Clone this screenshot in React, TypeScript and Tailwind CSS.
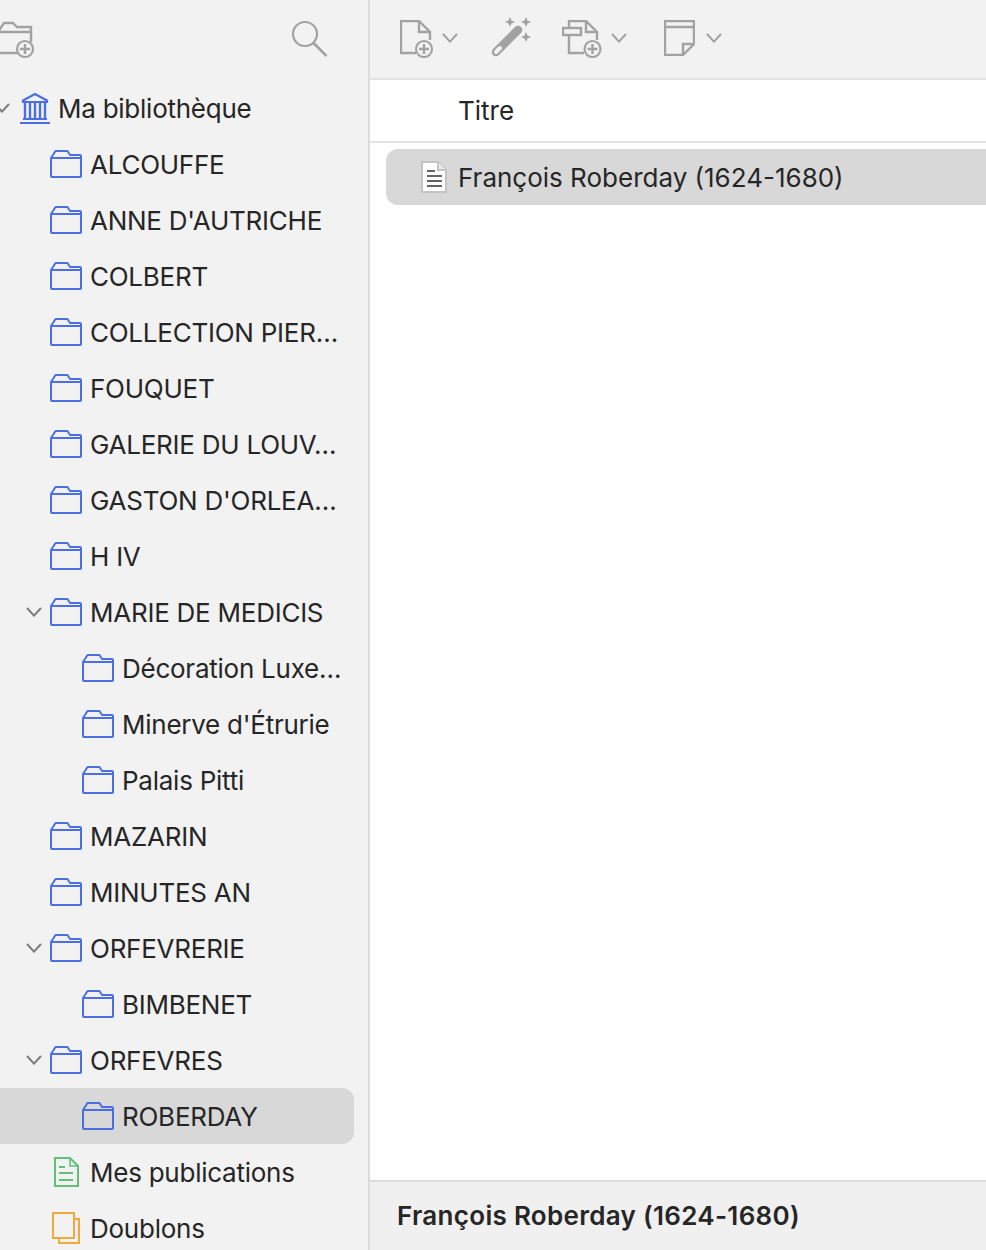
import React from 'react';
import clsx from 'clsx';

const BLUE = '#4a6fe3';
const GRAY = '#a2a2a2';

const Chevron = ({ className, color = '#7b7b7b' }: { className?: string; color?: string }) => (
	<svg width="16" height="10" viewBox="0 0 16 10" fill="none" className={clsx('shrink-0', className)}>
		<path d="M1 1l7 7.600L15 1" stroke={color} strokeWidth="2" />
	</svg>
);

const FolderIcon = () => (
	<svg width="32" height="28" viewBox="0 0 32 28" fill="none">
		<path
			d="M1 8V26a1 1 0 0 0 1 1H30a1 1 0 0 0 1-1V6a1 1 0 0 0-1-1H20L17.500 1H5.500L1 8H31"
			stroke={BLUE}
			strokeWidth="2"
			strokeLinejoin="round"
		/>
	</svg>
);

const LibraryIcon = () => (
	<svg width="30" height="32" viewBox="0 0 30 32" fill="none">
		<path d="M3 8.500L15 2l12 6.500V10H3z" stroke={BLUE} strokeWidth="2.200" />
		<path d="M3 27h24" stroke={BLUE} strokeWidth="2" />
		<path d="M5 11v15M10 11v15M15 11v15M20 11v15M25 11v15" stroke={BLUE} strokeWidth="2.400" />
		<path d="M0 31h30" stroke={BLUE} strokeWidth="2" />
	</svg>
);

const PublicationsIcon = () => (
	<svg width="25" height="30" viewBox="0 0 25 30" fill="none">
		<path d="M1 1H16L24 9V29H1z" stroke="#62c076" strokeWidth="2" />
		<path d="M16 1V9H24" stroke="#62c076" strokeWidth="1.600" />
		<path d="M5 10h6M5 16h14M5 23h14" stroke="#62c076" strokeWidth="2" />
	</svg>
);

const DuplicatesIcon = () => (
	<svg width="28" height="32" viewBox="0 0 28 32" fill="none">
		<path d="M22 7H27V31H7V26" stroke="#f0a93a" strokeWidth="2" />
		<rect x="1" y="1" width="21" height="25" stroke="#f0a93a" strokeWidth="2" />
	</svg>
);

const PlusBadge = ({ cx, cy }: { cx: number; cy: number }) => (
	<>
		<circle cx={cx} cy={cy} r="8" stroke={GRAY} strokeWidth="2.200" fill="#f2f2f2" />
		<path d={`M${cx - 5} ${cy}h10M${cx} ${cy - 5}v10`} stroke={GRAY} strokeWidth="2.400" />
	</>
);

const NewFolderIcon = () => (
	<svg width="34" height="40" viewBox="0 0 34 40" fill="none">
		<path d="M-2 12L4 3H13L17 7H31V22M0 12H31M0 33H18" stroke={GRAY} strokeWidth="2.400" />
		<PlusBadge cx={25} cy={29} />
	</svg>
);

const SearchIcon = () => (
	<svg width="38" height="38" viewBox="0 0 38 38" fill="none">
		<circle cx="15" cy="14" r="12" stroke={GRAY} strokeWidth="2.200" />
		<path d="M23.500 23l13 13" stroke={GRAY} strokeWidth="2.500" />
	</svg>
);

const NewItemIcon = () => (
	<svg width="34" height="38" viewBox="0 0 34 38" fill="none">
		<path d="M16 33H1V1H19L30 12V20" stroke={GRAY} strokeWidth="2.400" />
		<path d="M19 1V12H30" stroke={GRAY} strokeWidth="2.400" />
		<PlusBadge cx={24} cy={29} />
	</svg>
);

const WandIcon = () => (
	<svg width="40" height="40" viewBox="0 0 40 40" fill="none">
		<path d="M5 35L27 13" stroke={GRAY} strokeWidth="8.500" strokeLinecap="round" />
		<path d="M5 35L9 31" stroke="#f2f2f2" strokeWidth="4" strokeLinecap="round" />
		<path
			d="M19 0l1.500 3.500L24 5l-3.500 1.500L19 10l-1.500-3.500L14 5l3.500-1.500zM35 0l1.500 3.500L40 5l-3.500 1.500L35 10l-1.500-3.500L30 5l3.500-1.500zM35 15l1.500 3.500L40 20l-3.500 1.500L35 25l-1.500-3.500L30 20l3.500-1.500z"
			fill={GRAY}
		/>
	</svg>
);

const AttachIcon = () => (
	<svg width="41" height="38" viewBox="0 0 41 38" fill="none">
		<path d="M7 8V1H24L35 12V20M22 33H7V15" stroke={GRAY} strokeWidth="2.400" />
		<path d="M24 1V12H35" stroke={GRAY} strokeWidth="2.400" />
		<rect x="1" y="8" width="18" height="7" stroke={GRAY} strokeWidth="2.400" fill="#f2f2f2" />
		<PlusBadge cx={30.500} cy={29} />
	</svg>
);

const NoteIcon = () => (
	<svg width="31" height="36" viewBox="0 0 31 36" fill="none">
		<path d="M1 1H30V24L19 35H1z" stroke={GRAY} strokeWidth="2.400" />
		<path d="M1 7H30M19 35V24H30" stroke={GRAY} strokeWidth="2.400" />
	</svg>
);

const DocumentIcon = () => (
	<svg width="26" height="32" viewBox="0 0 26 32" fill="none">
		<path d="M1 1H17L25 9V31H1z" fill="#fff" stroke="#c4c4c4" strokeWidth="2" />
		<path d="M17 1V9H25" fill="#ececec" stroke="#c4c4c4" strokeWidth="2" />
		<path d="M6 10h8M6 15h15M6 20h15M6 25h15" stroke="#333" strokeWidth="1.600" />
	</svg>
);

interface TreeRow {
	label: string;
	depth: number;
	open?: boolean;
	selected?: boolean;
	icon?: React.ReactNode;
}

const rows: TreeRow[] = [
	{ label: 'ALCOUFFE', depth: 1 },
	{ label: "ANNE D'AUTRICHE", depth: 1 },
	{ label: 'COLBERT', depth: 1 },
	{ label: 'COLLECTION PIER…', depth: 1 },
	{ label: 'FOUQUET', depth: 1 },
	{ label: 'GALERIE DU LOUV…', depth: 1 },
	{ label: "GASTON D'ORLEA…", depth: 1 },
	{ label: 'H IV', depth: 1 },
	{ label: 'MARIE DE MEDICIS', depth: 1, open: true },
	{ label: 'Décoration Luxe…', depth: 2 },
	{ label: "Minerve d'Étrurie", depth: 2 },
	{ label: 'Palais Pitti', depth: 2 },
	{ label: 'MAZARIN', depth: 1 },
	{ label: 'MINUTES AN', depth: 1 },
	{ label: 'ORFEVRERIE', depth: 1, open: true },
	{ label: 'BIMBENET', depth: 2 },
	{ label: 'ORFEVRES', depth: 1, open: true },
	{ label: 'ROBERDAY', depth: 2, selected: true },
	{ label: 'Mes publications', depth: 1, icon: <PublicationsIcon /> },
	{ label: 'Doublons', depth: 1, icon: <DuplicatesIcon /> },
];

const Row = ({ label, depth, open, selected, icon }: TreeRow) => (
	<div
		className={clsx(
			'flex h-14 shrink-0 items-center rounded-r-xl',
			depth === 1 ? 'pl-[26px]' : 'pl-[58px]',
			selected && 'bg-[#d8d8d8]'
		)}
	>
		<div className="mr-2 flex w-4 shrink-0 justify-center">{open && <Chevron />}</div>
		<div className="mr-2 flex w-8 shrink-0 justify-center">{icon ?? <FolderIcon />}</div>
		<span className="whitespace-nowrap">{label}</span>
	</div>
);

export default function App() {
	return (
		<div className="flex h-[1250px] w-[986px] overflow-hidden bg-white font-['Inter',sans-serif] text-[26px] text-[#262626]">
			{/* Sidebar. */}
			<aside className="flex w-[370px] shrink-0 flex-col overflow-hidden border-r-2 border-[#dcdcdc] bg-[#f2f2f2] tracking-[-0.25px]">
				<div className="flex h-20 shrink-0 items-start justify-between pt-[20px] pr-[40px]">
					<NewFolderIcon />
					<SearchIcon />
				</div>
				<div className="flex w-[354px] flex-col">
					<div className="flex h-14 shrink-0 items-center">
						<Chevron className="-ml-[6px] mr-[10px]" />
						<div className="mr-[8px] w-[30px] shrink-0">
							<LibraryIcon />
						</div>
						<span>Ma bibliothèque</span>
					</div>
					{rows.map((row) => (
						<Row key={row.label} {...row} />
					))}
				</div>
			</aside>

			{/* Main column. */}
			<main className="flex min-w-0 flex-1 flex-col">
				<div className="flex h-20 shrink-0 items-start border-b-2 border-[#e3e3e3] bg-[#f2f2f2] pl-[30px]">
					<div className="mt-[20px]">
						<NewItemIcon />
					</div>
					<Chevron className="ml-2 mt-[33px]" color={GRAY} />
					<div className="ml-[33px] mt-[17px]">
						<WandIcon />
					</div>
					<div className="ml-[31px] mt-[20px]">
						<AttachIcon />
					</div>
					<Chevron className="ml-2 mt-[33px]" color={GRAY} />
					<div className="ml-[37px] mt-[20px]">
						<NoteIcon />
					</div>
					<Chevron className="ml-[11px] mt-[33px]" color={GRAY} />
				</div>
				<div className="flex h-[63px] shrink-0 items-center border-b-2 border-[#e3e3e3] pl-[88px]">Titre</div>
				<div className="flex-1 pt-[6px] pl-4">
					<div className="flex h-14 items-center rounded-l-xl bg-[#d8d8d8] pl-[35px]">
						<DocumentIcon />
						<span className="ml-[11px]">François Roberday (1624-1680)</span>
					</div>
				</div>
				<div className="flex h-[70px] shrink-0 items-center border-t-2 border-[#dcdcdc] bg-[#f0f0f0] pb-[2px] pl-[27px] font-semibold tracking-[0.3px]">
					François Roberday (1624-1680)
				</div>
			</main>
		</div>
	);
}
